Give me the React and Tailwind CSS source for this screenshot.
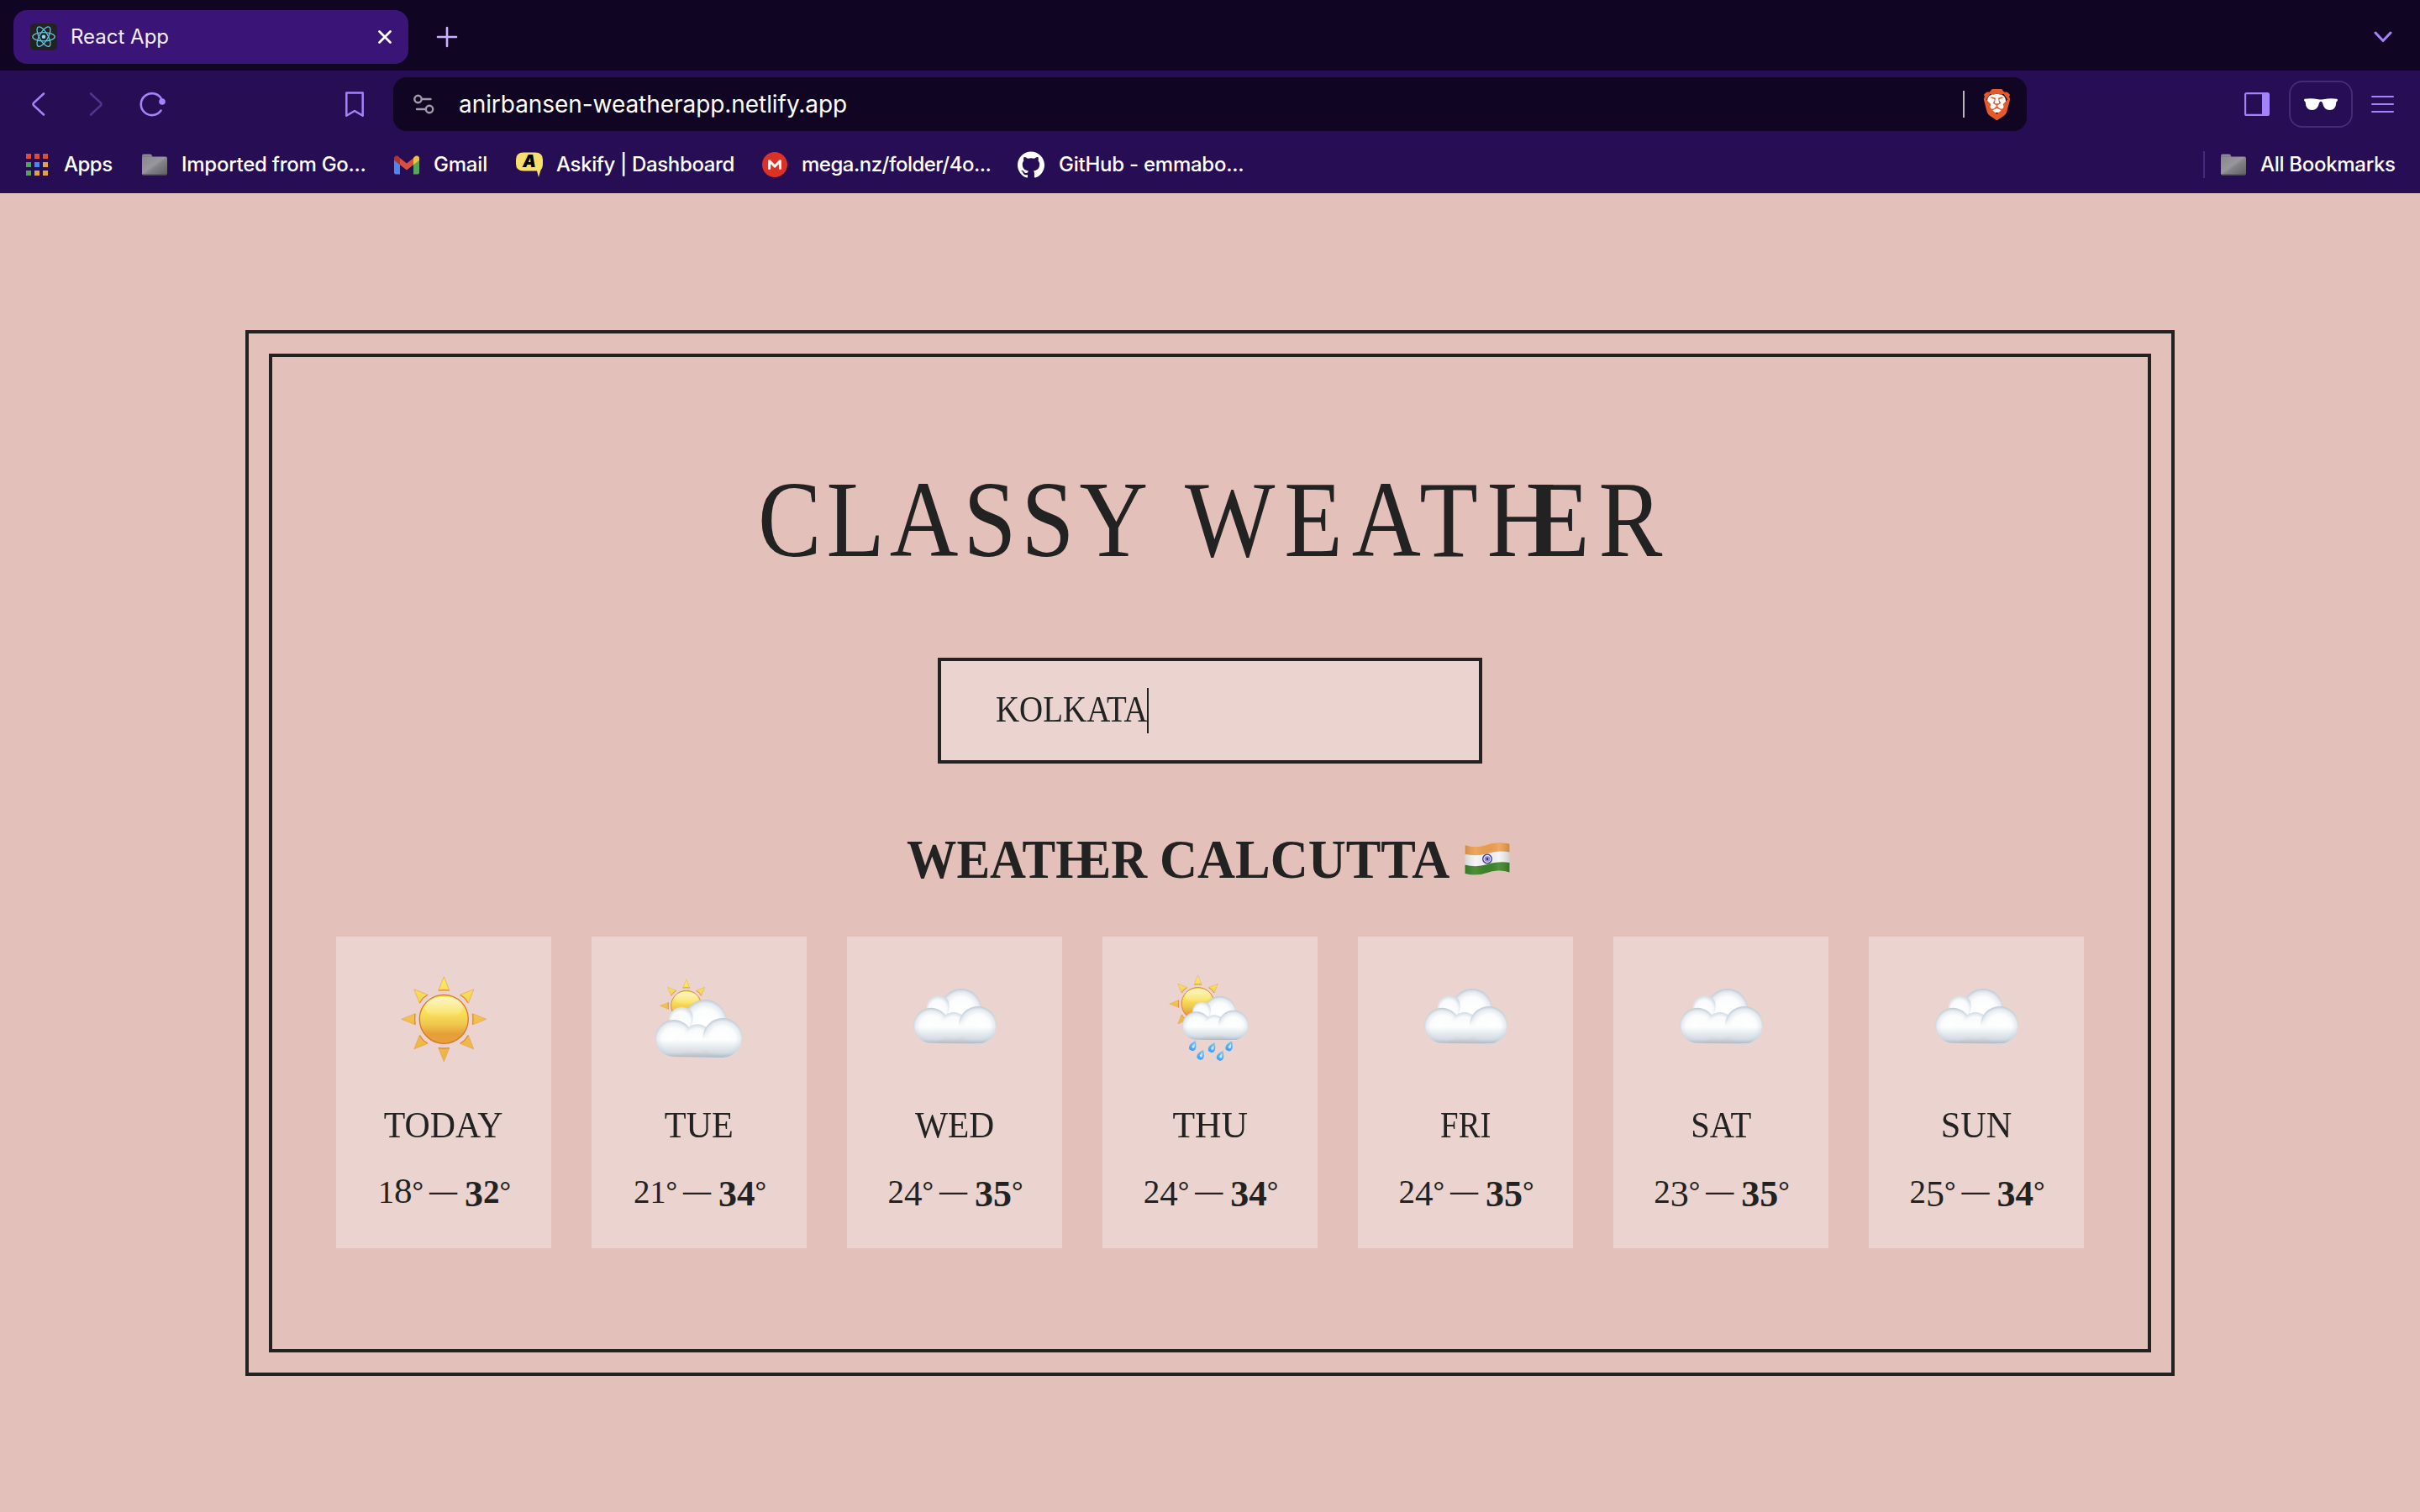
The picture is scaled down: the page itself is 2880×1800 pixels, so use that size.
import { SiBrave, SiGithub, SiMega } from "react-icons/si";

const serif = "font-['Liberation_Serif',serif]";

/* ---------- browser chrome icons ---------- */

const ReactIcon = () => (
  <svg className="w-8 h-8 rounded-[5px] bg-[#222222]" viewBox="0 0 32 32" fill="none" stroke="#61c3df" strokeWidth="1.3">
    <circle cx="16" cy="15.7" r="2.3" fill="#8fd8f0" stroke="none" />
    <ellipse cx="16" cy="15.7" rx="5.1" ry="13.2" transform="rotate(90 16 15.7)" />
    <ellipse cx="16" cy="15.7" rx="13.2" ry="5.1" transform="rotate(60 16 15.7)" />
    <ellipse cx="16" cy="15.7" rx="13.2" ry="5.1" transform="rotate(120 16 15.7)" />
  </svg>
);

const Folder = () => (
  <svg className="w-[30px] h-[26px] shrink-0" viewBox="0 0 30 26">
    <defs>
      <linearGradient id="folder" x1="0" y1="0" x2="1" y2="1">
        <stop offset="0" stopColor="#88878d" />
        <stop offset="0.45" stopColor="#98979e" />
        <stop offset="0.55" stopColor="#838287" />
        <stop offset="1" stopColor="#5e5d60" />
      </linearGradient>
    </defs>
    <path d="M0 5V2Q0 .5 1.5 .5H10Q11.5 .5 12 2L12.5 4V6H0Z" fill="#77767c" />
    <path d="M1 2.2Q1.2 1 2.5 1H9.6Q10.8 1 11.2 2.2Z" fill="#9b999f" />
    <rect x="0" y="3.6" width="30" height="22" rx="2" fill="url(#folder)" />
    <path d="M1 25H29" stroke="#4c4b4f" strokeWidth="1" />
  </svg>
);

const Gmail = () => (
  <svg className="w-[30px] h-[23px] shrink-0" viewBox="0 0 30 23">
    <path d="M0 4V20.5Q0 22.5 2 22.5H7V10Z" fill="#5086ec" />
    <path d="M30 4V20.5Q30 22.5 28 22.5H23V10Z" fill="#58a55c" />
    <path d="M7 3.2L15 9.5L23 3.2V11.2L15 17.4L7 11.2Z" fill="#d85140" />
    <path d="M0 3.8Q0 1 2.7 .6Q4.5 .3 5.8 1.7L7 3V11.2L0 5.8Z" fill="#b0342b" />
    <path d="M30 3.8Q30 1 27.3 .6Q25.5 .3 24.2 1.7L23 3V11.2L30 5.8Z" fill="#f1bf42" />
  </svg>
);

const Askify = () => (
  <span className="relative w-8 h-[30px] shrink-0">
    <svg className="w-8 h-[30px]" viewBox="0 0 32 30">
      <path d="M9 .5H23Q32 .5 32 9V14Q32 19 29.5 21.5L27 30L25 22.5H9Q0 22.5 0 14V9Q0 .5 9 .5Z" fill="#f8de6a" />
    </svg>
    <span className="absolute left-0 top-0 w-8 text-center leading-[23px] text-[20px] italic font-black text-black font-['Inter',sans-serif]">A</span>
  </span>
);

const appColors = [
  "bg-[#e04b3b]", "bg-[#e04b3b]", "bg-[#e04b3b]",
  "bg-[#55a05b]", "bg-[#4a86ee]", "bg-[#e5a43a]",
  "bg-[#55a05b]", "bg-[#e5a43a]", "bg-[#e5a43a]",
];
const AppsGrid = () => (
  <span className="grid grid-cols-3 gap-x-1 gap-y-1 w-[26px] shrink-0">
    {appColors.map((c, i) => <i key={i} className={`block w-[6px] h-[6px] ${c}`} />)}
  </span>
);

const Bookmark = ({ icon, text, iconBox, textBox }) => (
  <span className="flex items-center">
    <span className={`flex items-center ${iconBox}`}>{icon}</span>
    <span className={`whitespace-nowrap ${textBox}`}>{text}</span>
  </span>
);

function Browser() {
  return (
    <header className="h-[230px] bg-[#270e54] text-white font-['Inter',sans-serif]">
      <div className="h-[84px] bg-[#110524] flex items-center pl-4 pr-[33px] pt-1">
        <div className="w-[470px] h-16 rounded-2xl bg-[#3b1477] flex items-center pl-5 pr-[19px]">
          <ReactIcon />
          <span className="ml-4 text-[24px] text-[#f3effb]">React App</span>
          <svg className="ml-auto w-[18px] h-[18px]" viewBox="0 0 18 18" stroke="#fff" strokeWidth="2.8" strokeLinecap="round"><path d="M2.5 2.5L15.5 15.5M15.5 2.5L2.5 15.5" /></svg>
        </div>
        <svg className="ml-[33px] w-[26px] h-[26px]" viewBox="0 0 26 26" stroke="#c9b3ff" strokeWidth="2.6" strokeLinecap="round"><path d="M13 2V24M2 13H24" /></svg>
        <svg className="ml-auto w-[22px] h-[14px]" viewBox="0 0 22 14" fill="none" stroke="#a283fa" strokeWidth="3" strokeLinecap="round" strokeLinejoin="round"><path d="M2 2L11 11.5L20 2" /></svg>
      </div>

      <div className="h-20 flex items-center pl-[37px] pr-[31px]">
        <svg className="w-[18px] h-[30px]" viewBox="0 0 18 30" fill="none" stroke="#a283fa" strokeWidth="2.6" strokeLinecap="round" strokeLinejoin="round"><path d="M15 2.5L3 13.6Q2 15 3 16.4L15 27.5" /></svg>
        <svg className="ml-[50px] w-[18px] h-[30px]" viewBox="0 0 18 30" fill="none" stroke="#54338f" strokeWidth="2.6" strokeLinecap="round" strokeLinejoin="round"><path d="M3 2.5L15 13.6Q16 15 15 16.4L3 27.5" /></svg>
        <svg className="ml-[43px] w-8 h-[30px]" viewBox="0 0 32 30" fill="none" stroke="#a283fa" strokeWidth="2.6" strokeLinecap="round"><path d="M25.5 22.5A13 13 0 1 1 26.5 9.5" /><circle cx="27" cy="12" r="3.8" fill="#a283fa" stroke="none" /></svg>
        <svg className="ml-[213px] w-[22px] h-[31px]" viewBox="0 0 22 31" fill="none" stroke="#a283fa" strokeWidth="2.5" strokeLinejoin="round"><path d="M1.3 1.5H20.7V28.8L11 23L1.3 28.8Z" /></svg>
        <div className="ml-[35px] w-[1944px] h-16 rounded-2xl bg-[#110524] flex items-center pl-6 pr-[20px]">
          <svg className="w-[25px] h-[24px]" viewBox="0 0 25 24" fill="none" stroke="#a09ca9" strokeWidth="2.4" strokeLinecap="round"><circle cx="5.5" cy="6" r="4.2" /><path d="M10.5 6H20.5" /><circle cx="19" cy="18" r="4.2" /><path d="M14 18H4" /></svg>
          <span className="ml-[29px] text-[28px] tracking-[-0.06px]">anirbansen-weatherapp.netlify.app</span>
          <i className="ml-auto block w-[2px] h-8 bg-[#b9b5c0]" />
          <span className="ml-[22px] w-[32px] h-[37px] flex items-center justify-center relative">
            <i className="absolute left-[5px] top-[6px] w-[22px] h-[22px] rounded-lg bg-white" />
            <SiBrave className="relative w-[37px] h-[37px] shrink-0 text-[#e55a2b]" />
          </span>
        </div>
        <svg className="ml-auto w-[30px] h-[28px]" viewBox="0 0 30 28"><rect x="1.1" y="1.1" width="27.8" height="25.8" rx="1.5" fill="none" stroke="#a283fa" strokeWidth="2.2" /><path d="M21 1H28.5V27H21Z" fill="#a283fa" /></svg>
        <div className="ml-[23px] w-[76px] h-14 rounded-2xl border-2 border-[#452b74] flex items-center justify-center">
          <svg className="w-[40px] h-[14px]" viewBox="0 0 40 14" fill="#fff"><path d="M1 .8Q8 -.6 17 1.2Q20 1.8 23 1.2Q32 -.6 39 .8Q40 1 40 2Q40 3.6 38.4 4.2Q38 14 30.5 14Q23.5 14 22 5.5Q21.2 3.8 20 3.8Q18.8 3.8 18 5.5Q16.5 14 9.5 14Q2 14 1.6 4.2Q0 3.6 0 2Q0 1 1 .8Z" /></svg>
        </div>
        <span className="ml-[22px] flex flex-col gap-[6.5px]">
          <i className="block w-[27px] h-[2.5px] rounded bg-[#a283fa]" />
          <i className="block w-[27px] h-[2.5px] rounded bg-[#a283fa]" />
          <i className="block w-[27px] h-[2.5px] rounded bg-[#a283fa]" />
        </span>
      </div>

      <div className="h-[66px] pb-[2px] flex items-center pl-[31px] pr-[29px] text-[24px] font-medium">
        <Bookmark icon={<AppsGrid />} text="Apps" iconBox="w-[45px]" textBox="w-[93px] tracking-[-0.5px]" />
        <Bookmark icon={<Folder />} text="Imported from Go..." iconBox="w-[47px]" textBox="w-[253px] tracking-[-0.26px]" />
        <Bookmark icon={<Gmail />} text="Gmail" iconBox="w-[47px]" textBox="w-[98px] tracking-[-0.2px]" />
        <Bookmark icon={<Askify />} text="Askify | Dashboard" iconBox="w-[48px]" textBox="w-[245px] tracking-[-0.36px]" />
        <Bookmark
          icon={<span className="relative w-[30px] h-[30px]"><i className="absolute inset-[5px] bg-white" /><SiMega className="relative w-[30px] h-[30px] text-[#db3127]" /></span>}
          text="mega.nz/folder/4o..." iconBox="w-[47px]" textBox="w-[257px] tracking-[-0.5px]" />
        <Bookmark icon={<SiGithub className="w-8 h-8" />} text="GitHub - emmabo..." iconBox="w-[49px]" textBox="tracking-[-0.25px]" />
        <i className="ml-auto block w-[2px] h-8 bg-[#452b7a]" />
        <span className="ml-[19px] flex"><Folder /></span>
        <span className="ml-[17px] w-[161px] whitespace-nowrap tracking-[-0.3px]">All Bookmarks</span>
      </div>
    </header>
  );
}

/* ---------- weather drawings ---------- */

const Gradients = ({ id }) => (
  <defs>
    <linearGradient id={`sun-${id}`} x1="0" y1="0" x2="0" y2="1">
      <stop offset="0" stopColor="#fae04c" />
      <stop offset="0.35" stopColor="#f9e25a" />
      <stop offset="0.6" stopColor="#efc84c" />
      <stop offset="0.8" stopColor="#e6a03a" />
      <stop offset="1" stopColor="#e8a136" />
    </linearGradient>
    <linearGradient id={`gloss-${id}`} x1="0" y1="0" x2="0" y2="1">
      <stop offset="0" stopColor="#fff" stopOpacity="0.7" />
      <stop offset="1" stopColor="#fff" stopOpacity="0" />
    </linearGradient>
    <linearGradient id={`rays-${id}`} gradientUnits="userSpaceOnUse" x1="0" y1="-50" x2="0" y2="50">
      <stop offset="0" stopColor="#fbee5c" />
      <stop offset="0.5" stopColor="#f2c14b" />
      <stop offset="1" stopColor="#ecb345" />
    </linearGradient>
    <radialGradient id={`puff-${id}`} cx="0.5" cy="0.54" r="0.54">
      <stop offset="0" stopColor="#ffffff" />
      <stop offset="0.6" stopColor="#fbfcfd" />
      <stop offset="0.84" stopColor="#e8ecf0" />
      <stop offset="1" stopColor="#bcc8d4" />
    </radialGradient>
    <radialGradient id={`inner-${id}`} cx="0.5" cy="0.56" r="0.56">
      <stop offset="0" stopColor="#ffffff" />
      <stop offset="0.7" stopColor="#f9fafb" />
      <stop offset="1" stopColor="#d3dbe2" />
    </radialGradient>
    <linearGradient id={`base-${id}`} x1="0" y1="0" x2="0" y2="1">
      <stop offset="0.55" stopColor="#b4c1cd" stopOpacity="0" />
      <stop offset="0.88" stopColor="#b4c1cd" stopOpacity="0.55" />
      <stop offset="1" stopColor="#a9b9c8" stopOpacity="1" />
    </linearGradient>
    <linearGradient id={`drop-${id}`} x1="0" y1="0" x2="0" y2="1">
      <stop offset="0" stopColor="#7fc6f3" />
      <stop offset="1" stopColor="#3f9df0" />
    </linearGradient>
    <filter id={`soft-${id}`} x="-40%" y="-40%" width="180%" height="180%">
      <feGaussianBlur stdDeviation="10" />
    </filter>
    <clipPath id={`body-${id}`}>
      <path d="M66 72A66 66 0 0 0 66 204L240 207A70 70 0 0 0 240 66Q190 66 170 104Q150 82 120 94Q100 72 66 72Z" />
    </clipPath>
  </defs>
);

const Sun = ({ id, x, y, scale }) => (
  <g transform={`translate(${x} ${y}) scale(${scale})`}>
    <g fill={`url(#rays-${id})`} stroke="#e2984a" strokeWidth="0.6">
      <path d="M0 -50.5L6.6 -34Q0 -35 -6.6 -34Z" />
      <path d="M0 50.5L6.6 34Q0 35 -6.6 34Z" />
      <path d="M-50.5 0L-34 6.6Q-35 0 -34 -6.6Z" />
      <path d="M50.5 0L34 6.6Q35 0 34 -6.6Z" />
      <path d="M-35.5 -35.5L-29 -19Q-25.5 -26 -19 -29Z" />
      <path d="M35.5 -35.5L29 -19Q25.5 -26 19 -29Z" />
      <path d="M-35.5 35.5L-29 19Q-25.5 26 -19 29Z" />
      <path d="M35.5 35.5L29 19Q25.5 26 19 29Z" />
    </g>
    <g fill="none" stroke="#e08b33" strokeWidth="1.2">
      <path d="M-6.3 -34.3Q0 -35.2 6.3 -34.3M-6.3 34.3Q0 35.2 6.3 34.3M-34.3 -6.3Q-35.2 0 -34.3 6.3M34.3 -6.3Q35.2 0 34.3 6.3" />
      <path d="M-28.5 -19.5Q-25.5 -26 -19.5 -28.5M28.5 -19.5Q25.5 -26 19.5 -28.5M-28.5 19.5Q-25.5 26 -19.5 28.5M28.5 19.5Q25.5 26 19.5 28.5" />
    </g>
    <circle r="29" fill={`url(#sun-${id})`} stroke="#d9762c" strokeWidth="1.3" />
    <ellipse cx="0" cy="-14" rx="23" ry="12.5" fill={`url(#gloss-${id})`} />
  </g>
);

const Cloud = ({ id, x, y, scale }) => (
  <g transform={`translate(${x} ${y}) scale(${scale})`}>
    <circle cx="178" cy="76" r="76" fill={`url(#puff-${id})`} />
    <path d="M52 90A45 45 0 0 1 97 27Q132 29 134 62Q134 110 90 120Z" fill={`url(#inner-${id})`} />
    <circle cx="66" cy="138" r="66" fill={`url(#puff-${id})`} />
    <circle cx="150" cy="138" r="50" fill={`url(#inner-${id})`} />
    <circle cx="240" cy="137" r="71" fill={`url(#puff-${id})`} />
    <g clipPath={`url(#body-${id})`}>
      <rect x="56" y="128" width="200" height="66" rx="30" fill="#fcfdfd" filter={`url(#soft-${id})`} />
      <ellipse cx="98" cy="138" rx="26" ry="34" fill="#fcfdfd" filter={`url(#soft-${id})`} />
      <rect x="0" y="66" width="312" height="141" fill={`url(#base-${id})`} />
    </g>
  </g>
);

const drops = [[40, 87], [49.4, 97.7], [62.8, 89], [72.8, 98.7], [83.4, 87.3]];

const WeatherIcon = ({ kind, id }) => (
  <svg className="mt-[43px] w-[120px] h-[110px]" viewBox="0 0 120 110">
    <Gradients id={id} />
    {kind === "sun" && <Sun id={id} x={60.3} y={55.3} scale={1} />}
    {kind === "partly" && <><Sun id={id} x={44.7} y={39.3} scale={0.62} /><Cloud id={id} x={8} y={32} scale={0.3333} /></>}
    {kind === "cloud" && <Cloud id={id} x={11.3} y={19} scale={0.3173} />}
    {kind === "rain" && (
      <>
        <Sun id={id} x={45.6} y={37} scale={0.67} />
        <Cloud id={id} x={27} y={28} scale={0.2532} />
        {drops.map(([x, y]) => (
          <g key={x} transform={`translate(${x} ${y}) rotate(24)`}>
            <path d="M0 -6.5Q4.4 -.5 4.1 2A4.1 4.1 0 0 1 -4.1 2Q-4.4 -.5 0 -6.5Z" fill={`url(#drop-${id})`} />
            <path d="M.2 -3.5Q2.4 0 2 2.2A2 2 0 0 1 -1.2 1.4Z" fill="#c4e6fb" />
          </g>
        ))}
      </>
    )}
  </svg>
);

const Flag = () => (
  <svg className="w-[54px] h-[40px]" viewBox="0 0 54 40">
    <defs>
      <linearGradient id="wave" x1="0" x2="1">
        <stop offset="0" stopColor="#000" stopOpacity="0.14" />
        <stop offset="0.25" stopColor="#fff" stopOpacity="0.08" />
        <stop offset="0.5" stopColor="#000" stopOpacity="0.02" />
        <stop offset="0.75" stopColor="#fff" stopOpacity="0.1" />
        <stop offset="1" stopColor="#000" stopOpacity="0.16" />
      </linearGradient>
      <clipPath id="flagShape"><path d="M.5 4Q14 8 27 3.5T53.5 2.5V36.5Q40 32.5 27 37T.5 38Z" /></clipPath>
    </defs>
    <g clipPath="url(#flagShape)">
      <rect width="54" height="40" fill="#f4f4f4" />
      <path d="M0 0H54V12.5Q40 10 27 14T0 14.8Z" fill="#ee9f50" />
      <path d="M0 27.5Q14 31 27 27T54 25V40H0Z" fill="#3c8527" />
      <rect width="54" height="40" fill="url(#wave)" />
    </g>
    <circle cx="27" cy="20.5" r="5.3" fill="#e5e4f0" stroke="#3434a0" strokeWidth="1.3" />
    <circle cx="27" cy="20.5" r="2.6" fill="none" stroke="#8686c4" strokeWidth="1.5" />
    <circle cx="27" cy="20.5" r="1.5" fill="#26268c" />
  </svg>
);

/* ---------- weather page ---------- */

/* Old-style numerals: 1 and 2 sit at x-height, 3, 4 and 5 hang below the baseline. */
const digitStyle = {
  1: "text-[38px]",
  2: "text-[39px]",
  3: "text-[44px] translate-y-[4px]",
  4: "text-[43px] translate-y-[3px]",
  5: "text-[44px] translate-y-[4px]",
  8: "text-[43px]",
};
const Degrees = ({ value }) => (
  <>
    {value.split("").map((d, i) => <span key={i} className={`inline-block leading-[30px] ${digitStyle[d]}`}>{d}</span>)}
    <span className="inline-block -translate-y-[3px] text-[34px] leading-[30px] font-bold tracking-[-2px]">°</span>
  </>
);

const days = [
  { day: "TODAY", kind: "sun", min: "18", max: "32", fit: "scale-x-[0.95]" },
  { day: "TUE", kind: "partly", min: "21", max: "34", fit: "scale-x-[0.96]" },
  { day: "WED", kind: "cloud", min: "24", max: "35", fit: "scale-x-[0.94]" },
  { day: "THU", kind: "rain", min: "24", max: "34", fit: "scale-x-[0.99]" },
  { day: "FRI", kind: "cloud", min: "24", max: "35", fit: "scale-x-[0.88]" },
  { day: "SAT", kind: "cloud", min: "23", max: "35", fit: "scale-x-[0.92]" },
  { day: "SUN", kind: "cloud", min: "25", max: "34", fit: "scale-x-[0.96]" },
];

const DayCard = ({ day, kind, min, max, fit, id }) => (
  <li className="w-64 h-[371px] bg-[#ebd3cf] flex flex-col items-center">
    <WeatherIcon kind={kind} id={id} />
    <p className={`mt-[50px] text-[44px] leading-[44px] ${fit}`}>{day}</p>
    <p className="mt-[38px] h-11 flex items-baseline text-[38px] leading-[38px] whitespace-nowrap">
      <span><Degrees value={min} /></span>
      <span className="text-[33px] font-bold ml-[9px] mr-[9px] -translate-y-[3px]">—</span>
      <strong className="font-bold"><Degrees value={max} /></strong>
    </p>
  </li>
);

export default function App() {
  return (
    <div className={`w-[2880px] h-[1800px] overflow-hidden bg-[#e3c0ba] text-[#222222] ${serif}`}>
      <Browser />
      <main className="mt-[191px] mx-auto w-[2240px] h-[1189px] border-4 border-[#222222] outline-4 outline-offset-[24px] outline-[#222222] flex flex-col items-center">
        <h1 className="mt-32 h-[130px] flex gap-[44px] text-[130px] leading-[130px] whitespace-nowrap">
          <span className="w-[464px] origin-left scale-x-[0.87] tracking-[7px]">CLASSY</span>
          <span className="w-[569px] origin-left scale-x-[0.875] tracking-[12.5px]">WEAT<span className="tracking-[-34px]">H</span>ER</span>
        </h1>
        <div className="mt-[100px] w-[648px] h-[126px] border-4 border-[#222222] bg-[#ebd3cf] flex items-center pl-[65px]">
          <span className="w-[180px] pb-[2px] text-[44px] leading-[44px] whitespace-nowrap origin-left scale-x-[0.885]">KOLKATA</span>
          <i className="block w-[2px] h-[54px] bg-[#222222]" />
        </div>
        <h2 className="mt-[81px] pr-[5px] h-[66px] flex text-[66px] leading-[66px] font-bold whitespace-nowrap">
          <span className="w-[301px] origin-left scale-x-[0.9]">WEAT<span className="tracking-[-22px]">H</span>ER</span>
          <span className="w-[363px] origin-left scale-x-[0.945]">CALCUTTA</span>
          <span className="mt-[12px]"><Flag /></span>
        </h2>
        <ul className="mt-[59px] flex gap-12">
          {days.map((d, i) => <DayCard key={d.day} id={i} {...d} />)}
        </ul>
      </main>
    </div>
  );
}
